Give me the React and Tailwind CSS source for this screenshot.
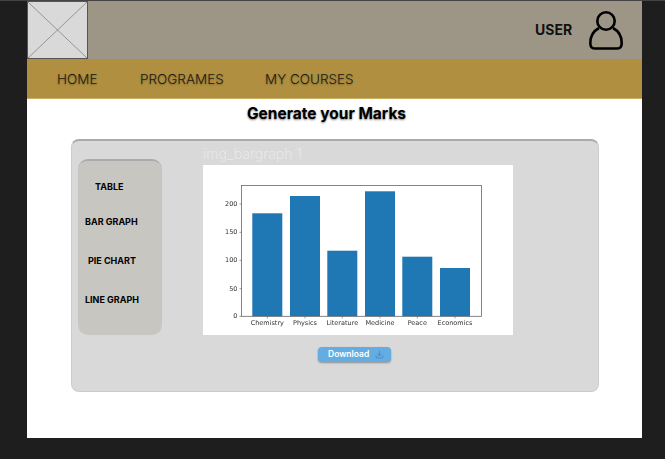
import { Download } from 'lucide-react';

const bars = [
  { name: 'Chemistry', x: 49.3, top: 48.3 },
  { name: 'Physics', x: 87, top: 31 },
  { name: 'Literature', x: 124.3, top: 85.7 },
  { name: 'Medicine', x: 162, top: 26.3 },
  { name: 'Peace', x: 199.3, top: 91.7 },
  { name: 'Economics', x: 237, top: 103 },
];

const ticks = [
  { label: '200', y: 39 },
  { label: '150', y: 67.3 },
  { label: '100', y: 95.3 },
  { label: '50', y: 123.7 },
  { label: '0', y: 151.3 },
];

function BarChart() {
  return (
    <svg width="310" height="170" viewBox="0 0 310 170" className="block blur-[0.3px]">
      {bars.map((b) => (
        <g key={b.name}>
          <rect x={b.x} y={b.top} width="30" height={151.3 - b.top} fill="#1f77b4" />
          <line x1={b.x + 15} x2={b.x + 15} y1="151.3" y2="153.3" stroke="#555" strokeWidth="0.6" />
          <text x={b.x + 15} y="160" textAnchor="middle" fontSize="6.5" fill="#333" fontFamily="DejaVu Sans, sans-serif">{b.name}</text>
        </g>
      ))}
      {ticks.map((t) => (
        <g key={t.label}>
          <line x1="36.5" x2="38.5" y1={t.y} y2={t.y} stroke="#555" strokeWidth="0.6" />
          <text x="34.5" y={t.y + 2} textAnchor="end" fontSize="6.5" fill="#333" fontFamily="DejaVu Sans, sans-serif">{t.label}</text>
        </g>
      ))}
      <rect x="38.5" y="20.5" width="240" height="130.8" fill="none" stroke="#666" strokeWidth="0.8" />
    </svg>
  );
}

function App() {
  return (
    <div className="h-[459px] w-[665px] overflow-hidden bg-[#1e1e1e] pl-[27px] font-['Inter',sans-serif] border-t border-[#444]">
      <div className="h-[437px] w-[615px] bg-white">
        {/* Header */}
        <header className="flex h-[58px] items-center bg-[#9d9686]">
          <div className="h-[58px] w-[61px] border border-[#555] bg-[#d9d9d9]">
            <svg width="59" height="56" viewBox="0 0 59 56" className="block">
              <path d="M0 0L59 56M59 0L0 56" stroke="#777" strokeWidth="0.7" />
            </svg>
          </div>
          <span className="ml-[447px] text-sm font-bold text-[#111]">USER</span>
          <svg width="34" height="39" viewBox="0 0 34 39" className="ml-[17px] mt-px" fill="none" stroke="#000" strokeWidth="2.6">
            <circle cx="17" cy="10" r="8.7" />
            <path d="M10 17C4.5 20 1.3 25.5 1.3 32C1.3 36 2.8 37.5 5.5 37.5H28.5C31.2 37.5 32.7 36 32.7 32C32.7 25.5 29.5 20 24 17" />
          </svg>
        </header>

        {/* Nav */}
        <nav className="flex h-10 items-center border-b border-[#c9ad62] bg-[#b09040] pl-[30px] pt-0.5 text-[13.5px] font-light text-[#1c1a12] [text-shadow:0_1px_2px_rgba(0,0,0,0.3)]">
          <span className="w-[83px]">HOME</span>
          <span className="w-[125px]">PROGRAMES</span>
          <span>MY COURSES</span>
        </nav>

        <h1 className="mt-[7px] pr-4 text-center text-[15.5px] leading-4 font-bold text-black [text-shadow:0_1px_2px_rgba(0,0,0,0.5)]">
          Generate your Marks
        </h1>

        {/* Panel */}
        <section className="ml-11 mt-[17px] flex h-[253px] w-[528px] rounded-lg border border-[#cccccc] border-t-2 border-t-[#aaa] bg-[#d9d9d9] pl-1.5">
          <div className="mt-[18px] h-[176px] w-[84px] rounded-[10px] border-t-2 border-t-[#aaa] bg-[#c8c6c1] text-[9px] leading-3 font-bold text-black">
            <p className="mt-5 pl-[17px]">TABLE</p>
            <p className="mt-[23px] pl-[7px]">BAR GRAPH</p>
            <p className="mt-[27px] pl-[10px]">PIE CHART</p>
            <p className="mt-[27px] pl-[7px]">LINE GRAPH</p>
          </div>
          <div className="ml-[41px] w-[310px]">
            <p className="mt-1 h-5 text-sm leading-[18px] font-light text-[#e8e8e8]">img_bargraph 1</p>
            <div className="bg-white">
              <BarChart />
            </div>
            <button className="ml-[115px] mt-3 flex h-[15px] w-[73px] items-center rounded-[4px] bg-[#63ade2] pb-px pl-[10px] text-[8.5px] font-semibold text-white shadow-[0_1px_2px_rgba(0,0,0,0.35)]">
              Download
              <Download size={9} className="ml-[6px] text-[#4a7fc0]" />
            </button>
          </div>
        </section>
      </div>
    </div>
  );
}

export default App;
